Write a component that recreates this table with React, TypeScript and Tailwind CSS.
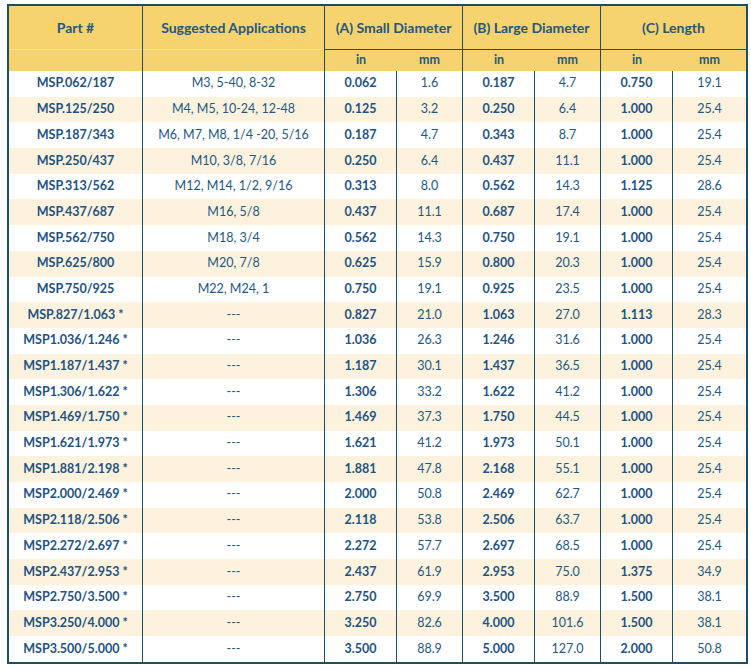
import React from 'react'

// Columns: part, apps, A in, A mm, B in, B mm, C in, C mm
const rows: string[][] = [
  ['MSP.062/187', 'M3, 5-40, 8-32', '0.062', '1.6', '0.187', '4.7', '0.750', '19.1'],
  ['MSP.125/250', 'M4, M5, 10-24, 12-48', '0.125', '3.2', '0.250', '6.4', '1.000', '25.4'],
  ['MSP.187/343', 'M6, M7, M8, 1/4 -20, 5/16', '0.187', '4.7', '0.343', '8.7', '1.000', '25.4'],
  ['MSP.250/437', 'M10, 3/8, 7/16', '0.250', '6.4', '0.437', '11.1', '1.000', '25.4'],
  ['MSP.313/562', 'M12, M14, 1/2, 9/16', '0.313', '8.0', '0.562', '14.3', '1.125', '28.6'],
  ['MSP.437/687', 'M16, 5/8', '0.437', '11.1', '0.687', '17.4', '1.000', '25.4'],
  ['MSP.562/750', 'M18, 3/4', '0.562', '14.3', '0.750', '19.1', '1.000', '25.4'],
  ['MSP.625/800', 'M20, 7/8', '0.625', '15.9', '0.800', '20.3', '1.000', '25.4'],
  ['MSP.750/925', 'M22, M24, 1', '0.750', '19.1', '0.925', '23.5', '1.000', '25.4'],
  ['MSP.827/1.063 *', '---', '0.827', '21.0', '1.063', '27.0', '1.113', '28.3'],
  ['MSP1.036/1.246 *', '---', '1.036', '26.3', '1.246', '31.6', '1.000', '25.4'],
  ['MSP1.187/1.437 *', '---', '1.187', '30.1', '1.437', '36.5', '1.000', '25.4'],
  ['MSP1.306/1.622 *', '---', '1.306', '33.2', '1.622', '41.2', '1.000', '25.4'],
  ['MSP1.469/1.750 *', '---', '1.469', '37.3', '1.750', '44.5', '1.000', '25.4'],
  ['MSP1.621/1.973 *', '---', '1.621', '41.2', '1.973', '50.1', '1.000', '25.4'],
  ['MSP1.881/2.198 *', '---', '1.881', '47.8', '2.168', '55.1', '1.000', '25.4'],
  ['MSP2.000/2.469 *', '---', '2.000', '50.8', '2.469', '62.7', '1.000', '25.4'],
  ['MSP2.118/2.506 *', '---', '2.118', '53.8', '2.506', '63.7', '1.000', '25.4'],
  ['MSP2.272/2.697 *', '---', '2.272', '57.7', '2.697', '68.5', '1.000', '25.4'],
  ['MSP2.437/2.953 *', '---', '2.437', '61.9', '2.953', '75.0', '1.375', '34.9'],
  ['MSP2.750/3.500 *', '---', '2.750', '69.9', '3.500', '88.9', '1.500', '38.1'],
  ['MSP3.250/4.000 *', '---', '3.250', '82.6', '4.000', '101.6', '1.500', '38.1'],
  ['MSP3.500/5.000 *', '---', '3.500', '88.9', '5.000', '127.0', '2.000', '50.8'],
]

const widths = ['w-[134px]', 'w-[182px]', 'w-[72px]', 'w-[66px]', 'w-[72px]', 'w-[66px]', 'w-[72px]', 'w-[73px]']
const bold = [true, false, true, false, true, false, true, false]

function GroupHeader({ title, last }: { title: string; last?: boolean }) {
  return (
    <div className={`flex flex-col ${last ? 'w-[145px]' : 'w-[138px] border-r border-[#1d4e66]'}`}>
      <div className="h-[44px] flex items-center justify-center border-b border-[#1d4e66]">{title}</div>
      <div className="h-[21px] flex text-[12.5px]">
        <div className="w-[72px] flex items-center justify-center">in</div>
        <div className="flex-1 flex items-center justify-center">mm</div>
      </div>
    </div>
  )
}

export default function App() {
  return (
    <div className="min-h-screen bg-white pt-[4px] pl-[7px]" style={{ fontFamily: 'Lato, "Open Sans", sans-serif' }}>
      <div className="w-[741px] border-2 border-[#1d4e66] text-[#24577f]">
        {/* Header */}
        <div className="flex bg-[#f6d36e] font-bold text-[14px]">
          <div className="w-[134px] flex flex-col border-r border-[#1d4e66]">
            <div className="h-[44px] flex items-center justify-center border-b border-[#f9e2a0]">Part #</div>
            <div className="h-[21px]" />
          </div>
          <div className="w-[182px] flex flex-col border-r border-[#1d4e66]">
            <div className="h-[44px] flex items-center justify-center border-b border-[#f9e2a0]">Suggested Applications</div>
            <div className="h-[21px]" />
          </div>
          <GroupHeader title="(A) Small Diameter" />
          <GroupHeader title="(B) Large Diameter" />
          <GroupHeader title="(C) Length" last />
        </div>

        {/* Body */}
        {rows.map((row, i) => (
          <div key={row[0]} className={`flex h-[25.7px] text-[12.5px] ${i % 2 === 1 ? 'bg-[#fdf2dd]' : 'bg-white'}`}>
            {row.map((cell, j) => (
              <div
                key={j}
                className={`${widths[j]} flex items-center justify-center ${j < 7 ? 'border-r border-[#1d4e66]' : ''} ${bold[j] ? 'font-bold text-[#1f5282]' : 'font-normal'}`}
              >
                {cell}
              </div>
            ))}
          </div>
        ))}
      </div>
    </div>
  )
}
